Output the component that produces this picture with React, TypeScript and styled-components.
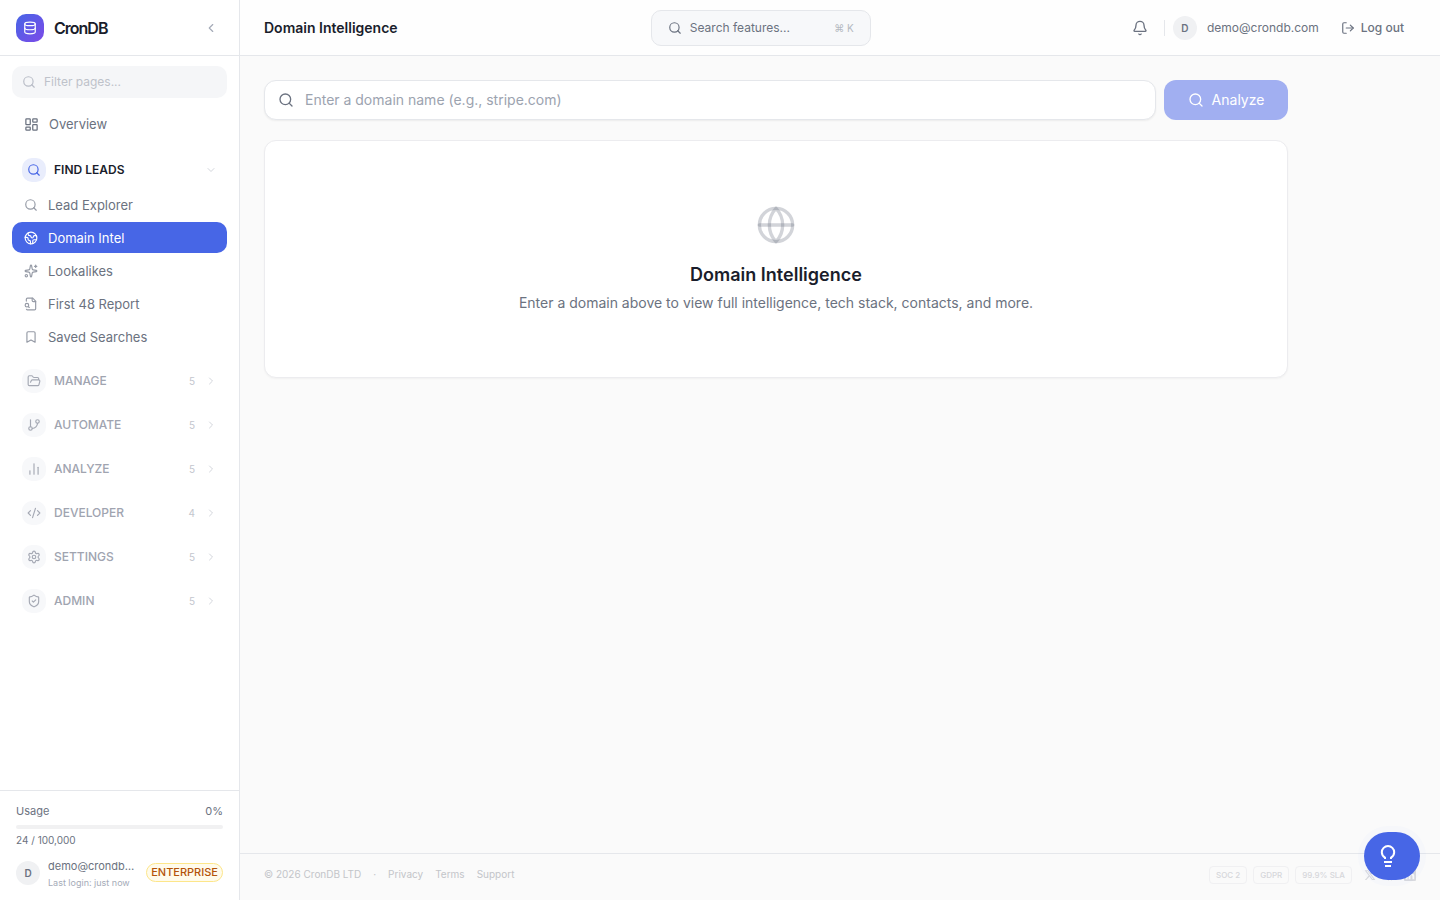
import React from 'react';
import styled, { createGlobalStyle } from 'styled-components';
import {
  Database, ChevronLeft, ChevronRight, ChevronDown, Search, LayoutDashboard, Earth, Sparkles,
  Bookmark, FolderOpen, GitBranch, ChartNoAxesColumn, CodeXml, Settings, ShieldCheck,
  Bell, LogOut, Globe, Github,
} from 'lucide-react';

const GlobalStyle = createGlobalStyle`
  *, *::before, *::after { box-sizing: border-box; }
  body { margin: 0; background: #fafafa; color: #1a1d2b; font: 14px/20px Inter, "Open Sans", sans-serif; }
  h1, h2, p, ul { margin: 0; padding: 0; }
  ul { list-style: none; }
  a { color: inherit; text-decoration: none; }
  button, input { font: inherit; color: inherit; }
  button { cursor: pointer; border: 0; background: none; padding: 0; }
  svg { flex-shrink: 0; }
`;

const Shell = styled.div`
  display: grid;
  grid-template-columns: 240px minmax(0, 1fr);
  min-height: 100vh;
`;

const Sidebar = styled.aside`
  display: flex;
  flex-direction: column;
  height: 100vh;
  position: sticky;
  top: 0;
  background: #fff;
  border-right: 1px solid #e5e7eb;
`;

const Brand = styled.div`
  display: flex;
  align-items: center;
  gap: 10px;
  height: 56px;
  padding: 0 16px;
  border-bottom: 1px solid #e5e7eb;
`;

const Logo = styled.span`
  display: grid;
  place-items: center;
  width: 28px;
  height: 28px;
  border-radius: 10px;
  color: #fff;
  background: linear-gradient(135deg, #4766e6, #7c4ae8);
`;

const BrandName = styled.span`
  flex: 1;
  font-size: 16px;
  font-weight: 600;
  letter-spacing: -1px;
`;

const Collapse = styled.button`
  display: grid;
  place-items: center;
  width: 24px;
  height: 24px;
  color: #a5abb8;
`;

const Nav = styled.nav`
  flex: 1;
  min-height: 0;
  overflow: hidden;
  padding: 10px 12px;
`;

const Filter = styled.label`
  display: flex;
  align-items: center;
  gap: 8px;
  height: 32px;
  padding: 0 10px;
  border-radius: 10px;
  background: #f5f6f8;
  color: #b9bdc7;

  input {
    width: 100%;
    min-width: 0;
    padding: 0;
    border: 0;
    outline: 0;
    background: none;
    font-size: 12px;
  }
  input::placeholder { color: #bec2ca; opacity: 1; }
`;

const OverviewLink = styled.a`
  display: flex;
  align-items: center;
  gap: 10px;
  height: 32px;
  margin: 10px 0 14px;
  padding: 0 12px;
  font-size: 13px;
  color: #6b7280;
`;

const Section = styled.section`
  margin-bottom: 12px;
`;

const SectionButton = styled.button<{ $open?: boolean }>`
  display: flex;
  align-items: center;
  width: 100%;
  height: 32px;
  padding: 0 10px;
  font-size: 12px;
  font-weight: ${p => (p.$open ? 600 : 500)};
  text-align: left;
  color: ${p => (p.$open ? '#1a1d2b' : '#a0a4b0')};
`;

const SectionIcon = styled.span<{ $open?: boolean }>`
  display: grid;
  place-items: center;
  width: 24px;
  height: 24px;
  margin-right: 8px;
  border-radius: 10px;
  background: ${p => (p.$open ? '#e9edfc' : '#f7f8fa')};
  color: ${p => (p.$open ? '#4766e6' : '#a5a9b4')};
`;

const SectionCount = styled.span`
  margin-left: auto;
  margin-right: 10px;
  font-size: 10px;
  font-weight: 400;
  color: #c3c6ce;
`;

const SectionChevron = styled.span<{ $open?: boolean }>`
  display: flex;
  margin-left: ${p => (p.$open ? 'auto' : '0')};
  color: #d3d6dc;
`;

const SubNav = styled.ul`
  display: grid;
  gap: 2px;
  padding: 3px 0 1px;
`;

const SubLink = styled.a<{ $active?: boolean }>`
  display: flex;
  align-items: center;
  gap: 10px;
  height: 31px;
  padding: 0 12px;
  border-radius: 10px;
  font-size: 13px;
  color: ${p => (p.$active ? '#fff' : '#6b7280')};
  background: ${p => (p.$active ? '#4766e6' : 'transparent')};

  svg { color: ${p => (p.$active ? '#fff' : '#969ba6')}; }
`;

const Account = styled.div`
  padding: 12px 16px 11px;
  border-top: 1px solid #e5e7eb;
  font-size: 11px;
  line-height: 16px;
  color: #6b7280;
`;

const UsageRow = styled.div`
  display: flex;
  justify-content: space-between;
`;

const UsageTrack = styled.div`
  height: 4px;
  margin: 6px 0 3px;
  border-radius: 2px;
  background: #f1f1f2;
`;

const UsageText = styled.p`
  font-size: 10px;
  line-height: 16px;
`;

const Profile = styled.div`
  display: flex;
  align-items: center;
  gap: 8px;
  margin-top: 8px;
`;

const Avatar = styled.span`
  display: grid;
  place-items: center;
  flex-shrink: 0;
  width: 24px;
  height: 24px;
  border-radius: 50%;
  background: #f0f1f3;
  color: #6b7280;
  font-size: 10px;
  font-weight: 600;
`;

const ProfileText = styled.div`
  flex: 1;
  min-width: 0;
  padding-right: 2px;
`;

const ProfileMail = styled.p`
  overflow: hidden;
  white-space: nowrap;
  text-overflow: ellipsis;
  font-size: 11px;
  line-height: 20px;
`;

const ProfileNote = styled.p`
  font-size: 9px;
  line-height: 13px;
  white-space: nowrap;
  color: #a5abb8;
`;

const Plan = styled.span`
  padding: 0 4px;
  border: 1px solid #fde68a;
  border-radius: 10px;
  background: #fffbeb;
  color: #b45309;
  font-size: 11px;
  font-weight: 500;
  line-height: 17px;
`;

const Column = styled.div`
  display: flex;
  flex-direction: column;
  min-width: 0;
`;

const TopBar = styled.header`
  display: flex;
  align-items: center;
  justify-content: space-between;
  height: 56px;
  padding: 0 24px;
  border-bottom: 1px solid #e5e7eb;
  background: #fefefe;
`;

const PageTitle = styled.h1`
  font-size: 14px;
  font-weight: 600;
  line-height: 20px;
`;

const FeatureSearch = styled.button`
  display: flex;
  align-items: center;
  gap: 8px;
  width: 220px;
  height: 36px;
  padding: 0 16px;
  border: 1px solid #e5e7eb;
  border-radius: 10px;
  background: #f7f8fa;
  color: #6b7280;
  font-size: 12px;
`;

const Shortcut = styled.kbd`
  margin-left: auto;
  font-family: inherit;
  font-size: 10px;
  color: #b4b8c1;
`;

const UserArea = styled.div`
  display: flex;
  align-items: center;
  padding-right: 12px;
  font-size: 12px;
  color: #6b7280;
`;

const BellButton = styled.button`
  display: grid;
  place-items: center;
  width: 32px;
  height: 32px;
  margin-right: 8px;
`;

const UserBadge = styled.div`
  display: flex;
  align-items: center;
  gap: 10px;
  padding-left: 8px;
  height: 16px;
  border-left: 1px solid #e5e7eb;
`;

const LogoutButton = styled.button`
  display: flex;
  align-items: center;
  gap: 6px;
  margin-left: 22px;
  font-weight: 500;
`;

const Main = styled.main`
  flex: 1;
  width: 100%;
  max-width: 1072px;
  padding: 24px;
`;

const SearchForm = styled.form`
  display: flex;
  gap: 8px;
`;

const DomainField = styled.label`
  display: flex;
  align-items: center;
  gap: 11px;
  flex: 1;
  height: 40px;
  padding: 0 13px;
  border: 1px solid #e5e7eb;
  border-radius: 12px;
  background: #fff;
  box-shadow: 0 1px 2px rgba(0, 0, 0, 0.06);
  color: #6b7280;

  input {
    flex: 1;
    padding: 0;
    border: 0;
    outline: 0;
    background: none;
    font-size: 14px;
  }
  input::placeholder { color: #9ca3af; opacity: 1; }
`;

const AnalyzeButton = styled.button`
  display: flex;
  align-items: center;
  justify-content: center;
  gap: 8px;
  width: 124px;
  height: 40px;
  border-radius: 12px;
  background: #a1aff1;
  color: #fff;
`;

const EmptyCard = styled.section`
  display: flex;
  flex-direction: column;
  align-items: center;
  margin-top: 20px;
  padding: 64px 24px;
  border: 1px solid #ececef;
  border-radius: 12px;
  background: #fff;
  box-shadow: 0 1px 2px rgba(0, 0, 0, 0.04);
  text-align: center;

  svg { color: rgba(107, 114, 128, 0.3); }
`;

const EmptyTitle = styled.h2`
  margin-top: 16px;
  font-size: 18px;
  font-weight: 600;
  line-height: 28px;
`;

const EmptyText = styled.p`
  margin-top: 4px;
  color: #6b7280;
`;

const PageFooter = styled.footer`
  display: flex;
  justify-content: space-between;
  height: 47px;
  padding: 10px 24px 0;
  border-top: 1px solid #e5e7eb;
  font-size: 10px;
  color: #c3c5c9;
`;

const FooterLinks = styled.nav`
  display: flex;
  gap: 12px;
`;

const FooterBadges = styled.div`
  display: flex;
  align-items: center;
  gap: 12px;
  height: 22px;
`;

const FooterGroup = styled.div<{ $gap: number }>`
  display: flex;
  align-items: center;
  gap: ${p => p.$gap}px;
`;

const Seal = styled.span`
  padding: 0 6px;
  border: 1px solid #f0f0f2;
  border-radius: 4px;
  font-size: 8px;
  font-weight: 500;
  line-height: 16px;
  color: #d6d7da;
`;

const Social = styled.a`
  display: flex;
  color: #d9dade;
`;

const HelpButton = styled.button`
  position: fixed;
  right: 20px;
  bottom: 20px;
  display: flex;
  align-items: center;
  width: 56px;
  height: 48px;
  padding-left: 12px;
  border-radius: 24px;
  background: #4766e6;
  color: #fff;
  box-shadow: 0 0 0 6px rgba(71, 102, 230, 0.02);
`;

type IconType = React.ComponentType<{ size?: number; strokeWidth?: number }>;

/* A page with a magnifier over its lower left corner. */
const ReportIcon: IconType = ({ size = 14, strokeWidth = 2 }) => (
  <svg width={size} height={size} viewBox="0 0 24 24" fill="none" stroke="currentColor"
    strokeWidth={strokeWidth} strokeLinecap="round" strokeLinejoin="round">
    <path d="M14 2v4a2 2 0 0 0 2 2h4" />
    <path d="M4.268 21a2 2 0 0 0 1.727 1H18a2 2 0 0 0 2-2V7l-5-5H6a2 2 0 0 0-2 2v3" />
    <path d="m9 18-1.500-1.500" />
    <circle cx="5" cy="14" r="3" />
  </svg>
);

const findLeads: { label: string; icon: IconType; active?: boolean }[] = [
  { label: 'Lead Explorer', icon: Search },
  { label: 'Domain Intel', icon: Earth, active: true },
  { label: 'Lookalikes', icon: Sparkles },
  { label: 'First 48 Report', icon: ReportIcon },
  { label: 'Saved Searches', icon: Bookmark },
];

const sections: { label: string; icon: IconType; count: number }[] = [
  { label: 'MANAGE', icon: FolderOpen, count: 5 },
  { label: 'AUTOMATE', icon: GitBranch, count: 5 },
  { label: 'ANALYZE', icon: ChartNoAxesColumn, count: 5 },
  { label: 'DEVELOPER', icon: CodeXml, count: 4 },
  { label: 'SETTINGS', icon: Settings, count: 5 },
  { label: 'ADMIN', icon: ShieldCheck, count: 5 },
];

export default function App() {
  return (
    <>
      <GlobalStyle />
      <Shell>
        <Sidebar>
          <Brand>
            <Logo><Database size={14} /></Logo>
            <BrandName>CronDB</BrandName>
            <Collapse aria-label="Collapse sidebar"><ChevronLeft size={14} /></Collapse>
          </Brand>
          <Nav aria-label="Main">
            <Filter>
              <Search size={14} />
              <input type="text" placeholder="Filter pages..." aria-label="Filter pages" />
            </Filter>
            <OverviewLink href="#overview"><LayoutDashboard size={15} />Overview</OverviewLink>
            <Section>
              <SectionButton $open aria-expanded="true">
                <SectionIcon $open><Search size={14} /></SectionIcon>
                FIND LEADS
                <SectionChevron $open><ChevronDown size={12} /></SectionChevron>
              </SectionButton>
              <SubNav>
                {findLeads.map(({ label, icon: Icon, active }) => (
                  <li key={label}>
                    <SubLink href="#" $active={active} aria-current={active ? 'page' : undefined}>
                      <Icon size={14} strokeWidth={2} />{label}
                    </SubLink>
                  </li>
                ))}
              </SubNav>
            </Section>
            {sections.map(({ label, icon: Icon, count }) => (
              <Section key={label}>
                <SectionButton aria-expanded="false">
                  <SectionIcon><Icon size={14} /></SectionIcon>
                  {label}
                  <SectionCount>{count}</SectionCount>
                  <SectionChevron><ChevronRight size={12} /></SectionChevron>
                </SectionButton>
              </Section>
            ))}
          </Nav>
          <Account>
            <UsageRow><span>Usage</span><span>0%</span></UsageRow>
            <UsageTrack />
            <UsageText>24 / 100,000</UsageText>
            <Profile>
              <Avatar>D</Avatar>
              <ProfileText>
                <ProfileMail>demo@crondb.com</ProfileMail>
                <ProfileNote>Last login: just now</ProfileNote>
              </ProfileText>
              <Plan>ENTERPRISE</Plan>
            </Profile>
          </Account>
        </Sidebar>
        <Column>
          <TopBar>
            <PageTitle>Domain Intelligence</PageTitle>
            <FeatureSearch>
              <Search size={14} />Search features...
              <Shortcut>⌘ K</Shortcut>
            </FeatureSearch>
            <UserArea>
              <BellButton aria-label="Notifications"><Bell size={16} /></BellButton>
              <UserBadge><Avatar>D</Avatar>demo@crondb.com</UserBadge>
              <LogoutButton><LogOut size={14} />Log out</LogoutButton>
            </UserArea>
          </TopBar>
          <Main>
            <SearchForm onSubmit={e => e.preventDefault()}>
              <DomainField>
                <Search size={16} />
                <input type="text" placeholder="Enter a domain name (e.g., stripe.com)" aria-label="Domain name" />
              </DomainField>
              <AnalyzeButton type="submit"><Search size={16} />Analyze</AnalyzeButton>
            </SearchForm>
            <EmptyCard>
              <Globe size={40} />
              <EmptyTitle>Domain Intelligence</EmptyTitle>
              <EmptyText>Enter a domain above to view full intelligence, tech stack, contacts, and more.</EmptyText>
            </EmptyCard>
          </Main>
          <PageFooter>
            <FooterLinks aria-label="Footer">
              <span>© 2026 CronDB LTD</span>
              <span>·</span>
              <a href="#privacy">Privacy</a>
              <a href="#terms">Terms</a>
              <a href="#support">Support</a>
            </FooterLinks>
            <FooterBadges>
              <FooterGroup $gap={6}>
                <Seal>SOC 2</Seal>
                <Seal>GDPR</Seal>
                <Seal>99.9% SLA</Seal>
              </FooterGroup>
              <FooterGroup $gap={8}>
                <Social href="#x" aria-label="X">
                  <svg width="12" height="12" viewBox="0 0 24 24" fill="currentColor">
                    <path d="M18.2 2.3h3.3l-7.2 8.2 8.5 11.3h-6.7l-5.2-6.9-6 6.9H1.6l7.7-8.800L1.2 2.300h6.800l4.700 6.200zm-1.100 17.500h1.800L7.100 4.100h-2z" />
                  </svg>
                </Social>
                <Social href="#github" aria-label="GitHub"><Github size={12} /></Social>
                <Social href="#linkedin" aria-label="LinkedIn">
                  <svg width="12" height="12" viewBox="0 0 24 24" fill="currentColor">
                    <path fillRule="evenodd" d="M2 0h20a2 2 0 0 1 2 2v20a2 2 0 0 1-2 2H2a2 2 0 0 1-2-2V2a2 2 0 0 1 2-2zm1.600 9v11.500h3.500V9zm1.800-5.700a2 2 0 1 0 0 4.100 2 2 0 0 0 0-4.100zM9.400 9v11.500h3.500v-5.700c0-3.400 4-3.200 4 0v5.700h3.600v-6.800c0-5.500-5.900-5.300-7.600-2.500V9z" />
                  </svg>
                </Social>
              </FooterGroup>
            </FooterBadges>
          </PageFooter>
        </Column>
      </Shell>
      <HelpButton aria-label="Tips">
        <svg width="24" height="24" viewBox="0 0 24 24" fill="none" stroke="currentColor" strokeWidth="2">
          <path d="M9 15v-1.300C7 12.400 5.800 11 5.800 8.300a6.200 6.200 0 0 1 12.400 0c0 2.700-1.200 4.100-3.200 5.400V15" />
          <path d="M8 18h8M9 22h6" />
        </svg>
      </HelpButton>
    </>
  );
}
